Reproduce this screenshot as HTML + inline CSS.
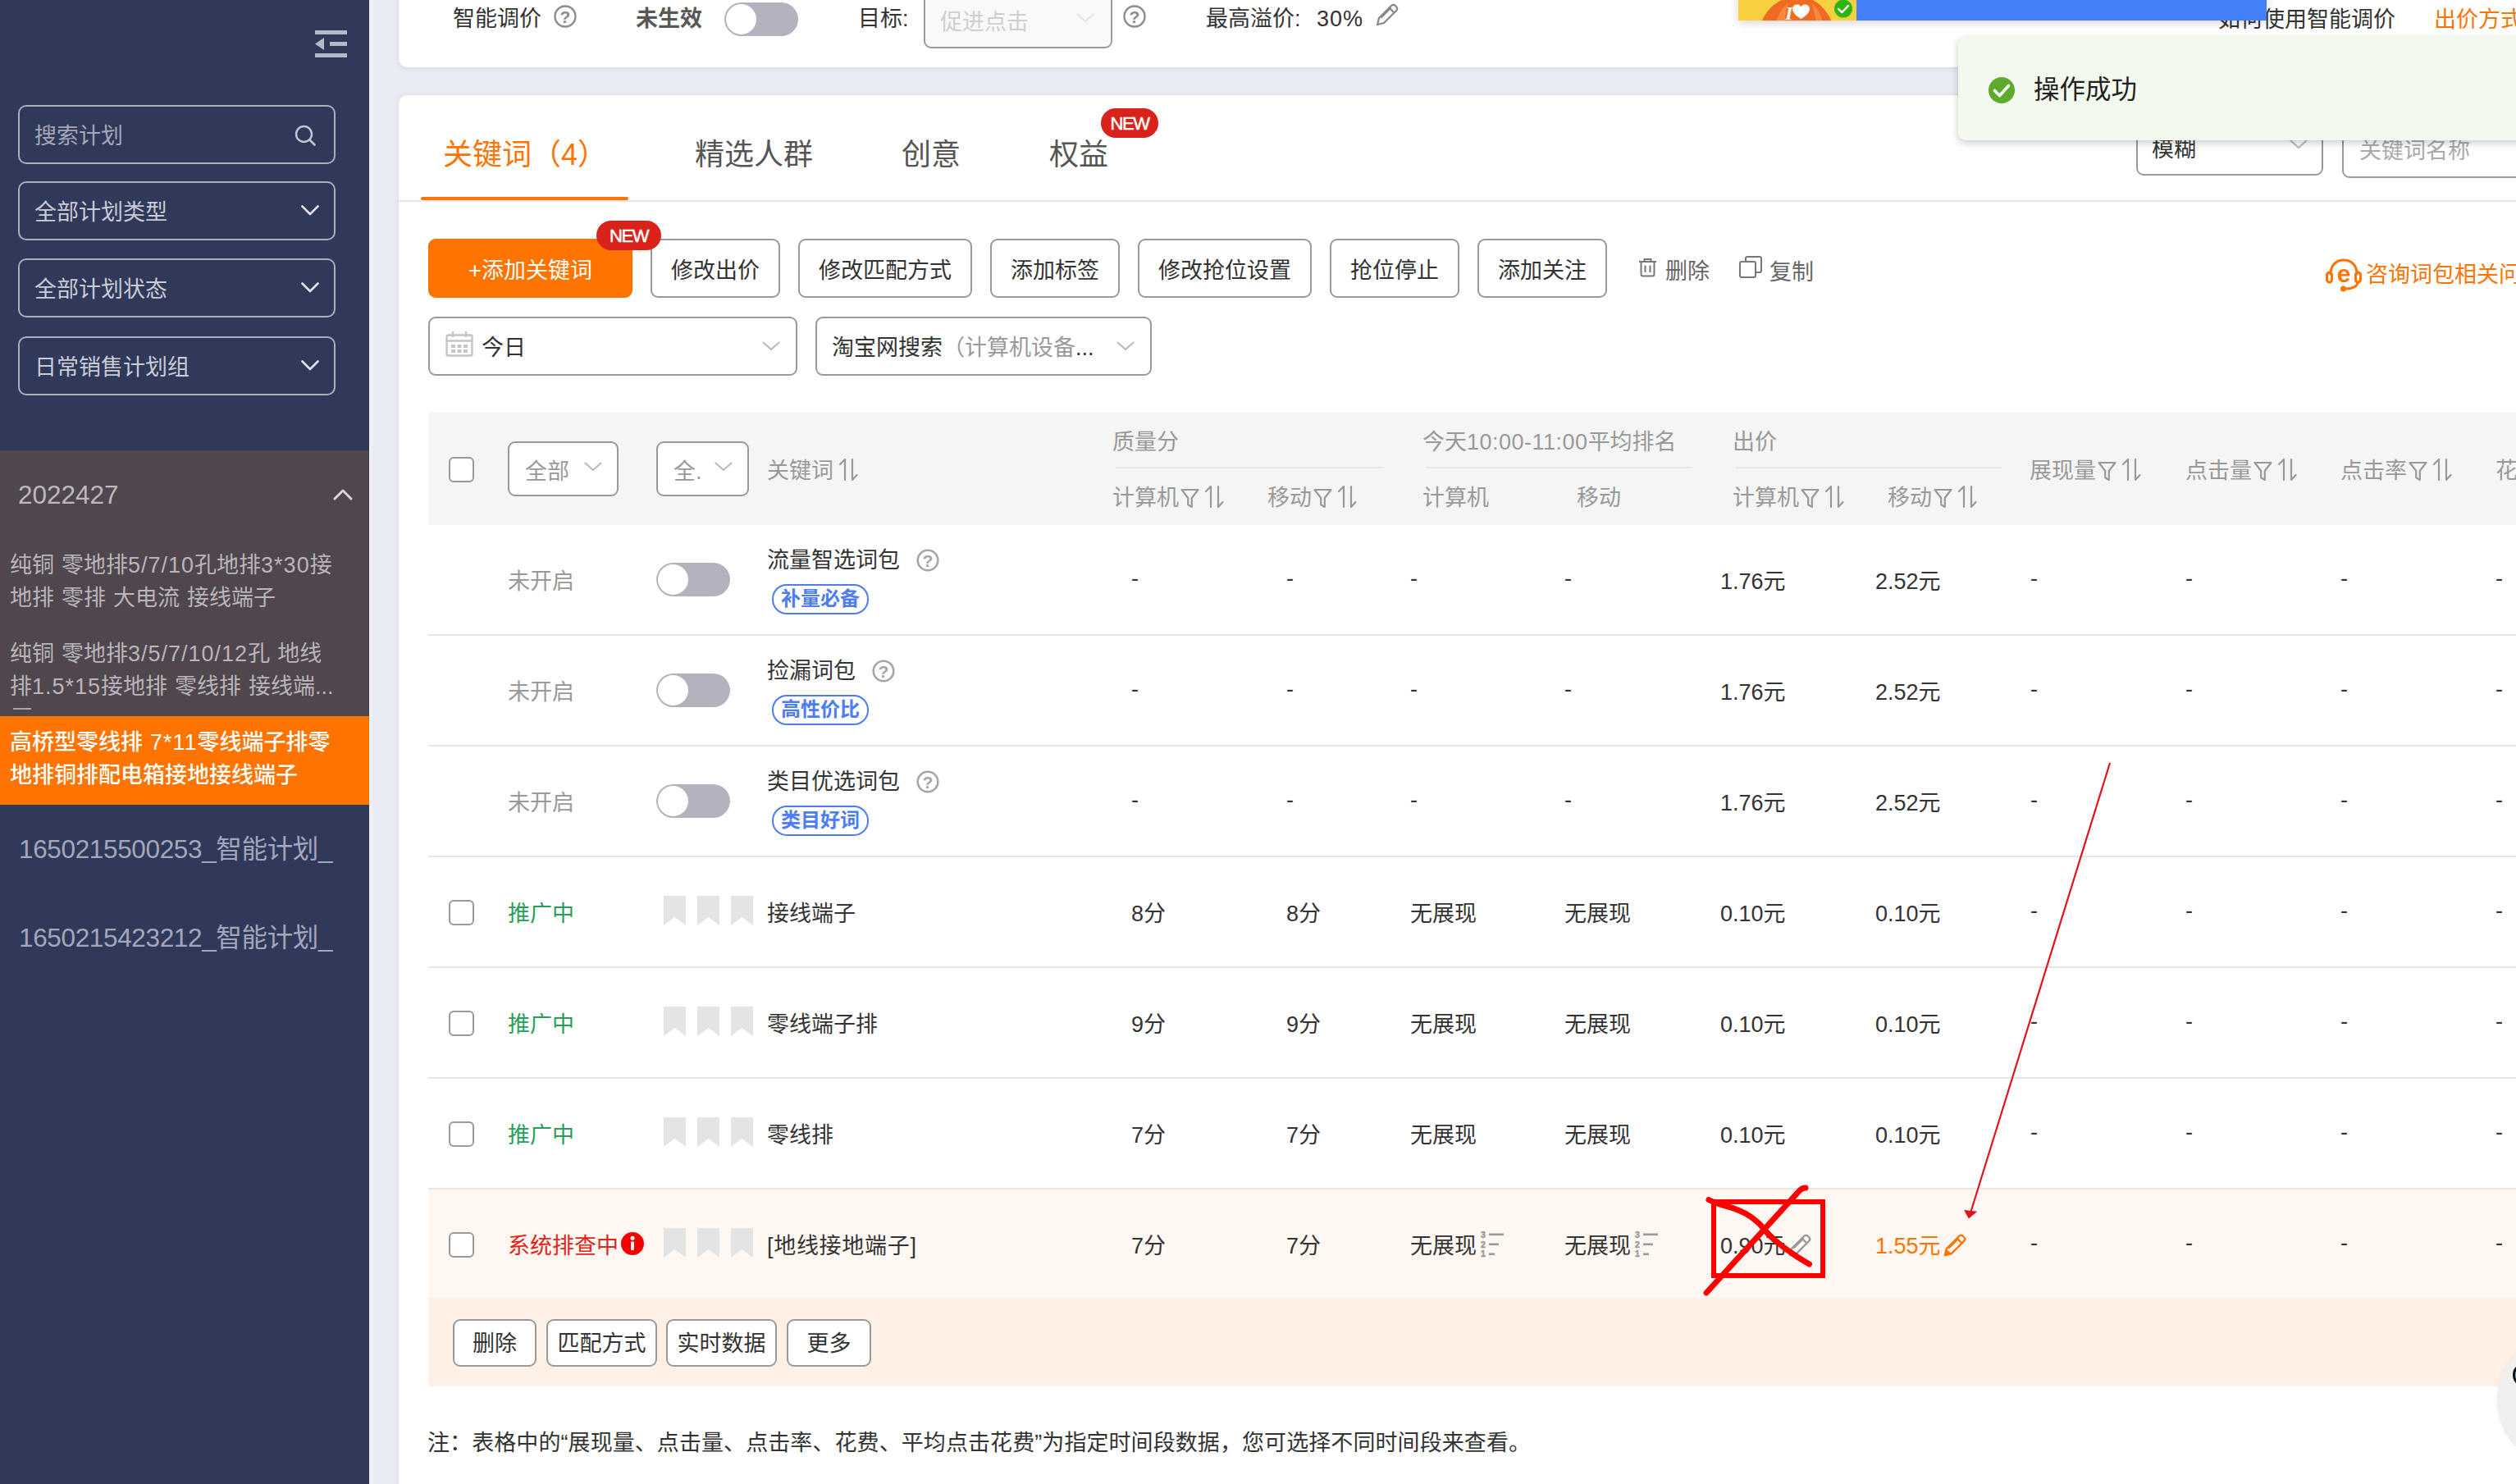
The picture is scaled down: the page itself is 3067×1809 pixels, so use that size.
<!DOCTYPE html>
<html lang="zh-CN">
<head>
<meta charset="utf-8">
<title>关键词</title>
<style>
*{box-sizing:border-box;margin:0;padding:0}
html,body{width:3067px;height:1809px;overflow:hidden}
body{position:relative;background:#e9ebf3;font-family:"Liberation Sans","Noto Sans CJK SC",sans-serif;font-size:27px;color:#333;line-height:40px}
.abs,.t{position:absolute}
.t{white-space:nowrap;line-height:40px;height:40px;margin-top:2px}
.n{letter-spacing:1px}
svg{position:absolute;overflow:visible}
/* sidebar */
#side{position:absolute;left:0;top:0;width:450px;height:1809px;background:#30395a;overflow:hidden}
#sidestrip{position:absolute;left:450px;top:0;width:4px;height:1809px;background:#eef0f6}
.sbox{position:absolute;left:22px;width:387px;height:72px;border:2px solid #aaaebd;border-radius:10px}
.sbox .t{left:18px;top:14px;color:#c9ccd6}
.sbox svg{left:343px;top:27px}
#grp{position:absolute;left:0;top:549px;width:450px;height:324px;background:#50464d}
.it{position:absolute;left:12px;margin-top:2px;word-spacing:1.5px;width:430px;font-size:27px;line-height:40px;color:#b9b5ba;white-space:nowrap}
#act{position:absolute;left:0;top:873px;width:450px;height:108px;background:#ff7300}
/* cards */
#c1{position:absolute;left:486px;top:-20px;width:2620px;height:102px;background:#fff;border-radius:10px;box-shadow:0 1px 4px rgba(190,195,215,.6)}
#c2{position:absolute;left:486px;top:116px;width:2620px;height:1740px;background:#fff;border-radius:10px;box-shadow:0 0 4px rgba(190,195,215,.5)}

.tog{position:absolute;width:90px;height:41px;border-radius:21px;background:#b3b3bf}
.tog i{position:absolute;left:2px;top:2px;width:37px;height:37px;border-radius:50%;background:#fff}
.tab{font-size:36px;line-height:50px;height:50px;top:162px;color:#555}
.badge{position:absolute;width:70px;height:36px;border-radius:18px;background:#d9231a;color:#fff;font-size:22px;line-height:37px;text-align:center;letter-spacing:-1.4px;-webkit-text-stroke:.5px #fff}
.btn{position:absolute;top:291px;height:72px;border:2px solid #999;border-radius:9px;background:#fff;text-align:center;line-height:74px;font-size:27px;color:#333;white-space:nowrap;overflow:hidden}

.h{color:#999}
.hl{height:2px;background:#e8e8e8}
.cb{position:absolute;width:31px;height:31px;border:2px solid #999;border-radius:6px;background:#fff}
.fi{position:relative;display:inline-block;vertical-align:middle;margin:-2px 0 0 2px}
.si{position:relative;display:inline-block;vertical-align:middle;margin:-6px 0 0 6px}
.hp{position:relative;display:inline-block;vertical-align:middle;margin:-3px 0 0 20px}
.rk{position:relative;display:inline-block;vertical-align:middle;margin:-8px 0 0 4px}
.pen{position:relative;display:inline-block;vertical-align:middle;margin:-5px 0 0 2px}
.tag{position:absolute;height:37px;padding:0 9px;border:2px solid #4d7cf3;border-radius:18px;color:#4d7cf3;font-size:24px;font-weight:bold;line-height:32px;white-space:nowrap}
.btn2{position:absolute;top:1608px;height:58px;border:2px solid #999;border-radius:9px;background:#fff;text-align:center;line-height:56px;font-size:27px;color:#333;white-space:nowrap}
</style>
</head>
<body>
<div id="side">
  <svg id="collapse" style="left:384px;top:36px" width="39" height="35" viewBox="0 0 39 35"><g fill="#b4b9c9"><rect x="0" y="1" width="39" height="5"/><rect x="18" y="15" width="21" height="5"/><rect x="0" y="29" width="39" height="5"/><path d="M0 17.5 L11 10 L11 25 Z"/></g></svg>
  <div class="sbox" style="top:128px"><div class="t" style="color:#a3a7b8">搜索计划</div><svg style="left:335px;top:22px" width="28" height="28" viewBox="0 0 28 28"><circle cx="11.5" cy="11.5" r="9.5" fill="none" stroke="#c3c6d2" stroke-width="2.4"/><path d="M18.5 18.5 L24.5 24.5" stroke="#c3c6d2" stroke-width="2.6" stroke-linecap="round"/></svg></div>
  <div class="sbox" style="top:221px"><div class="t">全部计划类型</div><svg width="22" height="13" viewBox="0 0 22 13"><path d="M1.5 1.5 L11 11 L20.5 1.5" fill="none" stroke="#e3e5ec" stroke-width="2.6" stroke-linecap="round" stroke-linejoin="round"/></svg></div>
  <div class="sbox" style="top:315px"><div class="t">全部计划状态</div><svg width="22" height="13" viewBox="0 0 22 13"><path d="M1.5 1.5 L11 11 L20.5 1.5" fill="none" stroke="#e3e5ec" stroke-width="2.6" stroke-linecap="round" stroke-linejoin="round"/></svg></div>
  <div class="sbox" style="top:410px"><div class="t">日常销售计划组</div><svg width="22" height="13" viewBox="0 0 22 13"><path d="M1.5 1.5 L11 11 L20.5 1.5" fill="none" stroke="#e3e5ec" stroke-width="2.6" stroke-linecap="round" stroke-linejoin="round"/></svg></div>
  <div id="grp"></div>
  <div class="t" style="left:22px;top:581px;font-size:31.5px;color:#bcb8bd">2022427</div>
  <svg style="left:406px;top:596px" width="24" height="14" viewBox="0 0 24 14"><path d="M2 12 L12 2 L22 12" fill="none" stroke="#d8d5d9" stroke-width="3" stroke-linecap="round" stroke-linejoin="round"/></svg>
  <div class="it" style="top:667px">纯铜 零地排<span class="n">5/7/10</span>孔地排<span class="n">3*30</span>接<br>地排 零排 大电流 接线端子</div>
  <div class="it" style="top:775px">纯铜 零地排<span class="n">3/5/7/10/12</span>孔 地线<br>排<span class="n">1.5*15</span>接地排 零线排 接线端...</div>
  <div class="abs" style="left:16px;top:863px;width:22px;height:2px;background:#a9a4aa"></div>
  <div id="act"></div>
  <div class="it" style="top:883px;color:#fff;font-weight:500">高桥型零线排 <span class="n">7*11</span>零线端子排零<br>地排铜排配电箱接地接线端子</div>
  <div class="t" style="left:23px;top:1013px;font-size:31.5px;color:#a2a7bb;letter-spacing:-.35px">1650215500253_智能计划_</div>
  <div class="t" style="left:23px;top:1121px;font-size:31.5px;color:#a2a7bb;letter-spacing:-.35px">1650215423212_智能计划_</div>
</div>
<div id="sidestrip"></div>
<div id="c1"></div>
<div id="c2"></div>
<!-- top bar -->
<div class="t" style="left:552px;top:1px">智能调价</div>
<svg class="help" style="left:675px;top:6px" width="28" height="28" viewBox="0 0 28 28"><circle cx="14" cy="14" r="12.5" fill="none" stroke="#8c8c8c" stroke-width="2.400"/><text x="14" y="21.500" text-anchor="middle" font-size="21" font-weight="bold" fill="#8c8c8c" font-family="Liberation Sans, sans-serif">?</text></svg>
<div class="t" style="left:775px;top:1px;font-weight:bold;color:#585858">未生效</div>
<div class="tog" style="left:883px;top:3px"><i></i></div>
<div class="t" style="left:1046px;top:1px">目标:</div>
<div class="abs" style="left:1126px;top:-20px;width:230px;height:79px;border:2px solid #9a9a9a;border-radius:9px;background:#f9f9f9"></div>
<div class="t" style="left:1146px;top:5px;color:#cfcfcf">促进点击</div>
<svg style="left:1312px;top:16px" width="22" height="12" viewBox="0 0 22 12"><path d="M1.5 1.5 L11 10 L20.5 1.5" fill="none" stroke="#e6e6e6" stroke-width="2.2" stroke-linecap="round" stroke-linejoin="round"/></svg>
<svg class="help" style="left:1369px;top:6px" width="28" height="28" viewBox="0 0 28 28"><circle cx="14" cy="14" r="12.5" fill="none" stroke="#8c8c8c" stroke-width="2.400"/><text x="14" y="21.500" text-anchor="middle" font-size="21" font-weight="bold" fill="#8c8c8c" font-family="Liberation Sans, sans-serif">?</text></svg>
<div class="t" style="left:1470px;top:1px">最高溢价: <span style="margin-left:12px;letter-spacing:1px">30%</span></div>
<svg style="left:1676px;top:3px" width="30" height="30" viewBox="0 0 30 30"><g fill="none" stroke="#888" stroke-width="2.2" stroke-linejoin="round" stroke-linecap="round"><path d="M3 27 L5 19 L20 4 C21.5 2.5 23.5 2.5 25 4 L26 5 C27.5 6.5 27.5 8.5 26 10 L11 25 Z"/><path d="M17.5 6.5 L23.5 12.5"/><path d="M8 18 L19 7"/></g></svg>
<div class="t" style="left:2704px;top:2px">如何使用智能调价</div>
<div class="t" style="left:2967px;top:2px;color:#ff7300">出价方式</div>
<!-- top floating banner -->
<div class="abs" style="left:2119px;top:-10px;width:644px;height:35px;background:#4480f7;box-shadow:0 3px 12px rgba(0,0,0,.16)"></div>
<div class="abs" style="left:2119px;top:0;width:144px;height:25px;overflow:hidden"><svg style="left:0;top:0" width="144" height="25" viewBox="0 0 144 25"><g><rect x="0" y="-5" width="144" height="30" fill="#f7cf3f"/><path d="M28 27 C36 8 52 -4 72 -4 C92 -4 106 8 114 27 Z" fill="#f06b21"/><path d="M46 27 C50 14 56 8 60 4 L56 27 Z" fill="#f58a3c"/><path d="M90 4 C96 10 100 16 103 27 L95 27 Z" fill="#f58a3c"/><path d="M76.500 23 C70 19 66 15 66 11 C66 7 69 5.500 72 5.500 C74.500 5.500 76 7 76.500 8.500 C77 7 78.500 5.500 81 5.500 C84 5.500 87 7 87 11 C87 15 83 19 76.500 23 Z" fill="#fff"/><text x="57" y="24" font-family="Liberation Serif, serif" font-style="italic" font-weight="bold" font-size="24" fill="#fff">I</text><circle cx="128" cy="10.500" r="11" fill="#2db514"/><path d="M122 11 L126.500 15 L134 7" fill="none" stroke="#fff" stroke-width="2.400" stroke-linecap="round" stroke-linejoin="round"/></g></svg></div>

<!-- tabs -->
<div class="abs" style="left:486px;top:244px;width:2600px;height:2px;background:#e8e8e8"></div>
<div class="t tab" style="left:540px;color:#ff7300">关键词（4）</div>
<div class="abs" style="left:513px;top:240px;width:253px;height:4px;border-radius:2px;background:#ff7300"></div>
<div class="t tab" style="left:847px">精选人群</div>
<div class="t tab" style="left:1099px">创意</div>
<div class="t tab" style="left:1279px">权益</div>
<div class="badge" style="left:1342px;top:132px">NEW</div>
<!-- search on right -->
<div class="abs" style="left:2604px;top:143px;width:228px;height:71px;border:2px solid #999;border-radius:9px"></div>
<div class="t" style="left:2623px;top:160px">模糊</div>
<svg style="left:2791px;top:170px" width="22" height="12" viewBox="0 0 22 12"><path d="M1.5 1.5 L11 10 L20.5 1.5" fill="none" stroke="#bbb" stroke-width="2.2" stroke-linecap="round" stroke-linejoin="round"/></svg>
<div class="abs" style="left:2855px;top:146px;width:260px;height:71px;border:2px solid #999;border-radius:9px"></div>
<div class="t" style="left:2876px;top:162px;color:#aaa">关键词名称</div>

<!-- toolbar -->
<div class="btn" style="left:522px;width:249px;background:#ff7300;border-color:#ff7300;color:#fff">+添加关键词</div>
<div class="btn" style="left:793px;width:158px">修改出价</div>
<div class="btn" style="left:973px;width:212px">修改匹配方式</div>
<div class="btn" style="left:1207px;width:158px">添加标签</div>
<div class="btn" style="left:1387px;width:212px">修改抢位设置</div>
<div class="btn" style="left:1621px;width:158px">抢位停止</div>
<div class="btn" style="left:1801px;width:158px">添加关注</div>
<div class="badge" style="left:727px;top:269px;width:79px">NEW</div>
<svg style="left:1997px;top:314px" width="23" height="24" viewBox="0 0 23 24"><g fill="none" stroke="#777" stroke-width="2"><path d="M1 5 H22"/><path d="M7.5 5 V2 H15.5 V5"/><path d="M3.5 5 V20 Q3.5 22.5 6 22.5 H17 Q19.500 22.5 19.5 20 V5"/><path d="M8.500 9.500 V18"/><path d="M14.500 9.500 V18"/></g></svg>
<div class="t" style="left:2030px;top:309px;color:#666">删除</div>
<svg style="left:2120px;top:312px" width="28" height="27" viewBox="0 0 28 27"><g fill="none" stroke="#777" stroke-width="2"><rect x="1" y="7" width="19" height="19" rx="2"/><path d="M8 7 V3 Q8 1 10 1 H25 Q27 1 27 3 V18 Q27 20 25 20 H20"/></g></svg>
<div class="t" style="left:2157px;top:310px;color:#666">复制</div>
<svg style="left:2834px;top:314px" width="46" height="42" viewBox="0 0 46 42"><g fill="none" stroke="#ff7300" stroke-width="3" stroke-linecap="round"><path d="M7 20 C7 9 14 3 23 3 C32 3 39 9 39 20"/><rect x="2.500" y="18" width="6" height="12" rx="3"/><rect x="37.500" y="18" width="6" height="12" rx="3"/><path d="M40 30 C40 35 34 38 25 38"/></g><circle cx="22.500" cy="38" r="3.500" fill="#ff7300"/><text x="23" y="30" text-anchor="middle" font-size="30" font-weight="bold" fill="#ff7300" font-family="Liberation Sans, sans-serif">e</text></svg>
<div class="t" style="left:2884px;top:313px;color:#ff7300">咨询词包相关问题</div>
<!-- filters -->
<div class="abs" style="left:522px;top:386px;width:450px;height:72px;border:2px solid #999;border-radius:9px"></div>
<svg style="left:543px;top:404px" width="34" height="31" viewBox="0 0 34 31"><g fill="none" stroke="#c4c4c4" stroke-width="2.4"><rect x="1.500" y="4.500" width="31" height="25" rx="2"/><path d="M1.500 11.500 H32.500"/><path d="M9 0 V7"/><path d="M25 0 V7"/></g><g fill="#c4c4c4"><rect x="7" y="16" width="5" height="4"/><rect x="14.500" y="16" width="5" height="4"/><rect x="22" y="16" width="5" height="4"/><rect x="7" y="22" width="5" height="4"/><rect x="14.500" y="22" width="5" height="4"/><rect x="22" y="22" width="5" height="4"/></g></svg>
<div class="t" style="left:587px;top:402px">今日</div>
<svg style="left:929px;top:416px" width="22" height="12" viewBox="0 0 22 12"><path d="M1.500 1.500 L11 10 L20.500 1.500" fill="none" stroke="#bbb" stroke-width="2.2" stroke-linecap="round" stroke-linejoin="round"/></svg>
<div class="abs" style="left:994px;top:386px;width:410px;height:72px;border:2px solid #999;border-radius:9px"></div>
<div class="t" style="left:1014px;top:402px">淘宝网搜索<span style="color:#999">（计算机设备</span>...</div>
<svg style="left:1361px;top:416px" width="22" height="12" viewBox="0 0 22 12"><path d="M1.500 1.500 L11 10 L20.500 1.500" fill="none" stroke="#bbb" stroke-width="2.2" stroke-linecap="round" stroke-linejoin="round"/></svg>

<!-- table -->
<div class="abs" style="left:522px;top:503px;width:2600px;height:137px;background:#f5f5f5"></div>
<div class="cb" style="left:547px;top:557px"></div>
<div class="abs" style="left:619px;top:538px;width:135px;height:67px;border:2px solid #999;border-radius:9px;background:#fff"></div>
<div class="t h" style="left:640px;top:553px">全部</div>
<svg style="left:712px;top:563px" width="22" height="12" viewBox="0 0 22 12"><path d="M1.500 1.500 L11 10 L20.500 1.500" fill="none" stroke="#bbb" stroke-width="2.2" stroke-linecap="round" stroke-linejoin="round"/></svg>
<div class="abs" style="left:800px;top:538px;width:113px;height:67px;border:2px solid #999;border-radius:9px;background:#fff"></div>
<div class="t h" style="left:821px;top:553px">全.</div>
<svg style="left:871px;top:563px" width="22" height="12" viewBox="0 0 22 12"><path d="M1.500 1.500 L11 10 L20.500 1.500" fill="none" stroke="#bbb" stroke-width="2.2" stroke-linecap="round" stroke-linejoin="round"/></svg>
<div class="t h" style="left:935px;top:552px">关键词<svg class="si" width="24" height="30" viewBox="0 0 24 30"><g fill="none" stroke="#999" stroke-width="2.2" stroke-linecap="round" stroke-linejoin="round"><path d="M2 8 L8 2 V27"/><path d="M17 2 V27 L22.500 21"/></g></svg></div>
<div class="t h" style="left:1356px;top:517px">质量分</div>
<div class="abs hl" style="left:1360px;top:569px;width:327px"></div>
<div class="t h" style="left:1356px;top:585px">计算机<svg class="fi" width="23" height="25" viewBox="0 0 23 25"><path d="M1.500 2 H21.500 L13.800 12 V23 L9.200 20.200 V12 Z" fill="none" stroke="#999" stroke-width="2.200" stroke-linejoin="round"/></svg><svg class="si" width="24" height="30" viewBox="0 0 24 30"><g fill="none" stroke="#999" stroke-width="2.2" stroke-linecap="round" stroke-linejoin="round"><path d="M2 8 L8 2 V27"/><path d="M17 2 V27 L22.500 21"/></g></svg></div>
<div class="t h" style="left:1545px;top:585px">移动<svg class="fi" width="23" height="25" viewBox="0 0 23 25"><path d="M1.500 2 H21.500 L13.800 12 V23 L9.200 20.200 V12 Z" fill="none" stroke="#999" stroke-width="2.200" stroke-linejoin="round"/></svg><svg class="si" width="24" height="30" viewBox="0 0 24 30"><g fill="none" stroke="#999" stroke-width="2.2" stroke-linecap="round" stroke-linejoin="round"><path d="M2 8 L8 2 V27"/><path d="M17 2 V27 L22.500 21"/></g></svg></div>
<div class="t h" style="left:1734px;top:517px">今天<span style="letter-spacing:.5px">10:00-11:00</span>平均排名</div>
<div class="abs hl" style="left:1738px;top:569px;width:325px"></div>
<div class="t h" style="left:1734px;top:585px">计算机</div>
<div class="t h" style="left:1922px;top:585px">移动</div>
<div class="t h" style="left:2112px;top:517px">出价</div>
<div class="abs hl" style="left:2116px;top:569px;width:324px"></div>
<div class="t h" style="left:2112px;top:585px">计算机<svg class="fi" width="23" height="25" viewBox="0 0 23 25"><path d="M1.500 2 H21.500 L13.800 12 V23 L9.200 20.200 V12 Z" fill="none" stroke="#999" stroke-width="2.200" stroke-linejoin="round"/></svg><svg class="si" width="24" height="30" viewBox="0 0 24 30"><g fill="none" stroke="#999" stroke-width="2.2" stroke-linecap="round" stroke-linejoin="round"><path d="M2 8 L8 2 V27"/><path d="M17 2 V27 L22.500 21"/></g></svg></div>
<div class="t h" style="left:2301px;top:585px">移动<svg class="fi" width="23" height="25" viewBox="0 0 23 25"><path d="M1.500 2 H21.500 L13.800 12 V23 L9.200 20.200 V12 Z" fill="none" stroke="#999" stroke-width="2.200" stroke-linejoin="round"/></svg><svg class="si" width="24" height="30" viewBox="0 0 24 30"><g fill="none" stroke="#999" stroke-width="2.2" stroke-linecap="round" stroke-linejoin="round"><path d="M2 8 L8 2 V27"/><path d="M17 2 V27 L22.500 21"/></g></svg></div>
<div class="t h" style="left:2474px;top:552px">展现量<svg class="fi" width="23" height="25" viewBox="0 0 23 25"><path d="M1.500 2 H21.500 L13.800 12 V23 L9.200 20.200 V12 Z" fill="none" stroke="#999" stroke-width="2.200" stroke-linejoin="round"/></svg><svg class="si" width="24" height="30" viewBox="0 0 24 30"><g fill="none" stroke="#999" stroke-width="2.2" stroke-linecap="round" stroke-linejoin="round"><path d="M2 8 L8 2 V27"/><path d="M17 2 V27 L22.500 21"/></g></svg></div>
<div class="t h" style="left:2664px;top:552px">点击量<svg class="fi" width="23" height="25" viewBox="0 0 23 25"><path d="M1.500 2 H21.500 L13.800 12 V23 L9.200 20.200 V12 Z" fill="none" stroke="#999" stroke-width="2.200" stroke-linejoin="round"/></svg><svg class="si" width="24" height="30" viewBox="0 0 24 30"><g fill="none" stroke="#999" stroke-width="2.2" stroke-linecap="round" stroke-linejoin="round"><path d="M2 8 L8 2 V27"/><path d="M17 2 V27 L22.500 21"/></g></svg></div>
<div class="t h" style="left:2853px;top:552px">点击率<svg class="fi" width="23" height="25" viewBox="0 0 23 25"><path d="M1.500 2 H21.500 L13.800 12 V23 L9.200 20.200 V12 Z" fill="none" stroke="#999" stroke-width="2.200" stroke-linejoin="round"/></svg><svg class="si" width="24" height="30" viewBox="0 0 24 30"><g fill="none" stroke="#999" stroke-width="2.2" stroke-linecap="round" stroke-linejoin="round"><path d="M2 8 L8 2 V27"/><path d="M17 2 V27 L22.500 21"/></g></svg></div>
<div class="t h" style="left:3042px;top:552px">花费<svg class="fi" width="23" height="25" viewBox="0 0 23 25"><path d="M1.500 2 H21.500 L13.800 12 V23 L9.200 20.200 V12 Z" fill="none" stroke="#999" stroke-width="2.200" stroke-linejoin="round"/></svg><svg class="si" width="24" height="30" viewBox="0 0 24 30"><g fill="none" stroke="#999" stroke-width="2.2" stroke-linecap="round" stroke-linejoin="round"><path d="M2 8 L8 2 V27"/><path d="M17 2 V27 L22.500 21"/></g></svg></div>
<div class="abs" style="left:522px;top:1450px;width:2600px;height:132px;background:#fff7f2"></div>
<div class="abs" style="left:522px;top:1582px;width:2600px;height:108px;background:#fff0e6"></div>
<div class="abs" style="left:522px;top:773px;width:2600px;height:2px;background:#e6e6e6"></div>
<div class="abs" style="left:522px;top:908px;width:2600px;height:2px;background:#e6e6e6"></div>
<div class="abs" style="left:522px;top:1043px;width:2600px;height:2px;background:#e6e6e6"></div>
<div class="abs" style="left:522px;top:1178px;width:2600px;height:2px;background:#e6e6e6"></div>
<div class="abs" style="left:522px;top:1313px;width:2600px;height:2px;background:#e6e6e6"></div>
<div class="abs" style="left:522px;top:1448px;width:2600px;height:2px;background:#e6e6e6"></div>
<div class="t" style="left:619px;top:687px;color:#999">未开启</div>
<div class="tog" style="left:800px;top:686px;width:90px;height:41px"><i style="width:37px;height:37px"></i></div>
<div class="t" style="left:935px;top:661px">流量智选词包<svg class="hp" width="28" height="28" viewBox="0 0 28 28"><circle cx="14" cy="14" r="12.300" fill="none" stroke="#a6a6a6" stroke-width="2.600"/><text x="14" y="21.500" text-anchor="middle" font-size="21" font-weight="bold" fill="#a6a6a6" font-family="Liberation Sans, sans-serif">?</text></svg></div>
<div class="tag" style="left:941px;top:712px">补量必备</div>
<div class="t" style="left:1379px;top:683px;">-</div>
<div class="t" style="left:1568px;top:683px;">-</div>
<div class="t" style="left:1719px;top:683px;">-</div>
<div class="t" style="left:1907px;top:683px;">-</div>
<div class="t" style="left:2097px;top:687px;">1.76元</div>
<div class="t" style="left:2286px;top:687px;">2.52元</div>
<div class="t" style="left:2475px;top:683px;">-</div>
<div class="t" style="left:2664px;top:683px;">-</div>
<div class="t" style="left:2853px;top:683px;">-</div>
<div class="t" style="left:3042px;top:683px;">-</div>
<div class="t" style="left:619px;top:822px;color:#999">未开启</div>
<div class="tog" style="left:800px;top:821px;width:90px;height:41px"><i style="width:37px;height:37px"></i></div>
<div class="t" style="left:935px;top:796px">捡漏词包<svg class="hp" width="28" height="28" viewBox="0 0 28 28"><circle cx="14" cy="14" r="12.300" fill="none" stroke="#a6a6a6" stroke-width="2.600"/><text x="14" y="21.500" text-anchor="middle" font-size="21" font-weight="bold" fill="#a6a6a6" font-family="Liberation Sans, sans-serif">?</text></svg></div>
<div class="tag" style="left:941px;top:847px">高性价比</div>
<div class="t" style="left:1379px;top:818px;">-</div>
<div class="t" style="left:1568px;top:818px;">-</div>
<div class="t" style="left:1719px;top:818px;">-</div>
<div class="t" style="left:1907px;top:818px;">-</div>
<div class="t" style="left:2097px;top:822px;">1.76元</div>
<div class="t" style="left:2286px;top:822px;">2.52元</div>
<div class="t" style="left:2475px;top:818px;">-</div>
<div class="t" style="left:2664px;top:818px;">-</div>
<div class="t" style="left:2853px;top:818px;">-</div>
<div class="t" style="left:3042px;top:818px;">-</div>
<div class="t" style="left:619px;top:957px;color:#999">未开启</div>
<div class="tog" style="left:800px;top:956px;width:90px;height:41px"><i style="width:37px;height:37px"></i></div>
<div class="t" style="left:935px;top:931px">类目优选词包<svg class="hp" width="28" height="28" viewBox="0 0 28 28"><circle cx="14" cy="14" r="12.300" fill="none" stroke="#a6a6a6" stroke-width="2.600"/><text x="14" y="21.500" text-anchor="middle" font-size="21" font-weight="bold" fill="#a6a6a6" font-family="Liberation Sans, sans-serif">?</text></svg></div>
<div class="tag" style="left:941px;top:982px">类目好词</div>
<div class="t" style="left:1379px;top:953px;">-</div>
<div class="t" style="left:1568px;top:953px;">-</div>
<div class="t" style="left:1719px;top:953px;">-</div>
<div class="t" style="left:1907px;top:953px;">-</div>
<div class="t" style="left:2097px;top:957px;">1.76元</div>
<div class="t" style="left:2286px;top:957px;">2.52元</div>
<div class="t" style="left:2475px;top:953px;">-</div>
<div class="t" style="left:2664px;top:953px;">-</div>
<div class="t" style="left:2853px;top:953px;">-</div>
<div class="t" style="left:3042px;top:953px;">-</div>
<div class="cb" style="left:547px;top:1097px"></div>
<div class="t" style="left:619px;top:1092px;color:#279f59">推广中</div>
<svg style="left:809px;top:1092px" width="27" height="36" viewBox="0 0 27 36"><path d="M0 0 H27 V36 L13.500 26 L0 36 Z" fill="#e4e4e4"/></svg>
<svg style="left:850px;top:1092px" width="27" height="36" viewBox="0 0 27 36"><path d="M0 0 H27 V36 L13.500 26 L0 36 Z" fill="#e4e4e4"/></svg>
<svg style="left:891px;top:1092px" width="27" height="36" viewBox="0 0 27 36"><path d="M0 0 H27 V36 L13.500 26 L0 36 Z" fill="#e4e4e4"/></svg>
<div class="t" style="left:935px;top:1092px;">接线端子</div>
<div class="t" style="left:1379px;top:1092px;">8分</div>
<div class="t" style="left:1568px;top:1092px;">8分</div>
<div class="t" style="left:1719px;top:1092px;">无展现</div>
<div class="t" style="left:1907px;top:1092px;">无展现</div>
<div class="t" style="left:2097px;top:1092px;">0.10元</div>
<div class="t" style="left:2286px;top:1092px;">0.10元</div>
<div class="t" style="left:2475px;top:1088px;">-</div>
<div class="t" style="left:2664px;top:1088px;">-</div>
<div class="t" style="left:2853px;top:1088px;">-</div>
<div class="t" style="left:3042px;top:1088px;">-</div>
<div class="cb" style="left:547px;top:1232px"></div>
<div class="t" style="left:619px;top:1227px;color:#279f59">推广中</div>
<svg style="left:809px;top:1227px" width="27" height="36" viewBox="0 0 27 36"><path d="M0 0 H27 V36 L13.500 26 L0 36 Z" fill="#e4e4e4"/></svg>
<svg style="left:850px;top:1227px" width="27" height="36" viewBox="0 0 27 36"><path d="M0 0 H27 V36 L13.500 26 L0 36 Z" fill="#e4e4e4"/></svg>
<svg style="left:891px;top:1227px" width="27" height="36" viewBox="0 0 27 36"><path d="M0 0 H27 V36 L13.500 26 L0 36 Z" fill="#e4e4e4"/></svg>
<div class="t" style="left:935px;top:1227px;">零线端子排</div>
<div class="t" style="left:1379px;top:1227px;">9分</div>
<div class="t" style="left:1568px;top:1227px;">9分</div>
<div class="t" style="left:1719px;top:1227px;">无展现</div>
<div class="t" style="left:1907px;top:1227px;">无展现</div>
<div class="t" style="left:2097px;top:1227px;">0.10元</div>
<div class="t" style="left:2286px;top:1227px;">0.10元</div>
<div class="t" style="left:2475px;top:1223px;">-</div>
<div class="t" style="left:2664px;top:1223px;">-</div>
<div class="t" style="left:2853px;top:1223px;">-</div>
<div class="t" style="left:3042px;top:1223px;">-</div>
<div class="cb" style="left:547px;top:1367px"></div>
<div class="t" style="left:619px;top:1362px;color:#279f59">推广中</div>
<svg style="left:809px;top:1362px" width="27" height="36" viewBox="0 0 27 36"><path d="M0 0 H27 V36 L13.500 26 L0 36 Z" fill="#e4e4e4"/></svg>
<svg style="left:850px;top:1362px" width="27" height="36" viewBox="0 0 27 36"><path d="M0 0 H27 V36 L13.500 26 L0 36 Z" fill="#e4e4e4"/></svg>
<svg style="left:891px;top:1362px" width="27" height="36" viewBox="0 0 27 36"><path d="M0 0 H27 V36 L13.500 26 L0 36 Z" fill="#e4e4e4"/></svg>
<div class="t" style="left:935px;top:1362px;">零线排</div>
<div class="t" style="left:1379px;top:1362px;">7分</div>
<div class="t" style="left:1568px;top:1362px;">7分</div>
<div class="t" style="left:1719px;top:1362px;">无展现</div>
<div class="t" style="left:1907px;top:1362px;">无展现</div>
<div class="t" style="left:2097px;top:1362px;">0.10元</div>
<div class="t" style="left:2286px;top:1362px;">0.10元</div>
<div class="t" style="left:2475px;top:1358px;">-</div>
<div class="t" style="left:2664px;top:1358px;">-</div>
<div class="t" style="left:2853px;top:1358px;">-</div>
<div class="t" style="left:3042px;top:1358px;">-</div>
<div class="cb" style="left:547px;top:1502px"></div>
<div class="t" style="left:619px;top:1497px;color:#e1251b">系统排查中</div>
<svg style="left:757px;top:1502px" width="28" height="28" viewBox="0 0 28 28"><circle cx="14" cy="14" r="14" fill="#f20000"/><circle cx="14" cy="7.300" r="2.500" fill="#fff"/><rect x="12.100" y="11.500" width="3.800" height="10.500" rx=".8" fill="#fff"/></svg>
<svg style="left:809px;top:1497px" width="27" height="36" viewBox="0 0 27 36"><path d="M0 0 H27 V36 L13.500 26 L0 36 Z" fill="#e4e4e4"/></svg>
<svg style="left:850px;top:1497px" width="27" height="36" viewBox="0 0 27 36"><path d="M0 0 H27 V36 L13.500 26 L0 36 Z" fill="#e4e4e4"/></svg>
<svg style="left:891px;top:1497px" width="27" height="36" viewBox="0 0 27 36"><path d="M0 0 H27 V36 L13.500 26 L0 36 Z" fill="#e4e4e4"/></svg>
<div class="t" style="left:935px;top:1497px;letter-spacing:.7px">[地线接地端子]</div>
<div class="t" style="left:1379px;top:1497px;">7分</div>
<div class="t" style="left:1568px;top:1497px;">7分</div>
<div class="t" style="left:1719px;top:1497px;">无展现<svg class="rk" width="29" height="31" viewBox="0 0 29 31"><g fill="#999"><rect x="11" y="2.500" width="18" height="2.600"/><rect x="11" y="14.500" width="12" height="2.600"/><rect x="11" y="26.500" width="7" height="2.600"/></g><g font-family="Liberation Sans, sans-serif" font-size="10.500" font-weight="bold" fill="#999" stroke="#999" stroke-width=".500"><text x="1" y="7.500">3</text><text x="1" y="19.500">2</text><text x="1" y="31">1</text></g></svg></div>
<div class="t" style="left:1907px;top:1497px;">无展现<svg class="rk" width="29" height="31" viewBox="0 0 29 31"><g fill="#999"><rect x="11" y="2.500" width="18" height="2.600"/><rect x="11" y="14.500" width="12" height="2.600"/><rect x="11" y="26.500" width="7" height="2.600"/></g><g font-family="Liberation Sans, sans-serif" font-size="10.500" font-weight="bold" fill="#999" stroke="#999" stroke-width=".500"><text x="1" y="7.500">3</text><text x="1" y="19.500">2</text><text x="1" y="31">1</text></g></svg></div>
<div class="t" style="left:2097px;top:1497px;">0.90元<svg class="pen" width="30" height="30" viewBox="0 0 30 30"><g fill="none" stroke="#999" stroke-width="2.400" stroke-linejoin="round" stroke-linecap="round"><path d="M3 27 L5 19 L20 4 C21.500 2.500 23.500 2.500 25 4 L26 5 C27.500 6.500 27.500 8.500 26 10 L11 25 Z"/><path d="M17.500 6.500 L23.500 12.500"/><path d="M8 18 L19 7"/><path d="M3 27 L4.500 21 L9 25.500 Z" fill="#999"/></g></svg></div>
<div class="t" style="left:2286px;top:1497px;color:#ff7300">1.55元<svg class="pen" width="30" height="30" viewBox="0 0 30 30"><g fill="none" stroke="#ff7300" stroke-width="2.400" stroke-linejoin="round" stroke-linecap="round"><path d="M3 27 L5 19 L20 4 C21.500 2.500 23.500 2.500 25 4 L26 5 C27.500 6.500 27.500 8.500 26 10 L11 25 Z"/><path d="M17.500 6.500 L23.500 12.500"/><path d="M8 18 L19 7"/><path d="M3 27 L4.500 21 L9 25.500 Z" fill="#ff7300"/></g></svg></div>
<div class="t" style="left:2475px;top:1493px;">-</div>
<div class="t" style="left:2664px;top:1493px;">-</div>
<div class="t" style="left:2853px;top:1493px;">-</div>
<div class="t" style="left:3042px;top:1493px;">-</div>
<div class="btn2" style="left:552px;width:102px">删除</div>
<div class="btn2" style="left:666px;width:135px">匹配方式</div>
<div class="btn2" style="left:812px;width:135px">实时数据</div>
<div class="btn2" style="left:959px;width:103px">更多</div>
<div class="t" style="left:521px;top:1737px;letter-spacing:.08px">注：表格中的“展现量、点击量、点击率、花费、平均点击花费”为指定时间段数据，您可选择不同时间段来查看。</div>

<!-- toast -->
<div class="abs" style="left:2387px;top:45px;width:720px;height:126px;background:#f4f9ee;border-radius:9px;box-shadow:0 3px 10px rgba(0,0,0,.22)"></div>
<svg style="left:2424px;top:94px" width="32" height="32" viewBox="0 0 32 32"><circle cx="16" cy="16" r="16" fill="#5dab2d"/><path d="M7.500 16.500 L13.500 22.500 L24.500 10.500" fill="none" stroke="#fff" stroke-width="3.600" stroke-linecap="round" stroke-linejoin="round"/></svg>
<div class="t" style="left:2479px;top:87px;font-size:31.500px;color:#222">操作成功</div>
<!-- annotations -->
<svg style="left:0;top:0" width="3067" height="1809" viewBox="0 0 3067 1809">
  <path d="M2572 930 L2402.500 1477" stroke="#e0141c" stroke-width="2.200" fill="none"/>
  <path d="M2399.800 1485.500 L2394 1475 L2410.300 1476.800 Z" fill="#e0141c"/>
  <rect x="2089" y="1465" width="133" height="90" fill="none" stroke="#ff0000" stroke-width="6"/>
  <path d="M2080 1576 L2194 1451 Q2197 1448 2201 1448" stroke="#ff0000" stroke-width="7" fill="none" stroke-linecap="round"/>
  <path d="M2083 1462.500 C2095 1469 2105 1470 2116 1474 S2141 1486 2151 1499 S2186 1530 2205.500 1541" stroke="#ff0000" stroke-width="7" fill="none" stroke-linecap="round"/>
</svg>
<!-- bottom right floating -->
<div class="abs" style="left:3044px;top:1626px;width:162px;height:162px;border-radius:50%;background:#efefef;box-shadow:0 0 5px rgba(0,0,0,.06)"></div>
<div class="abs" style="left:3063px;top:1663px;width:22px;height:26px;border:3px solid #111;border-radius:50%;background:#6fd0e0"></div>

</body>
</html>
